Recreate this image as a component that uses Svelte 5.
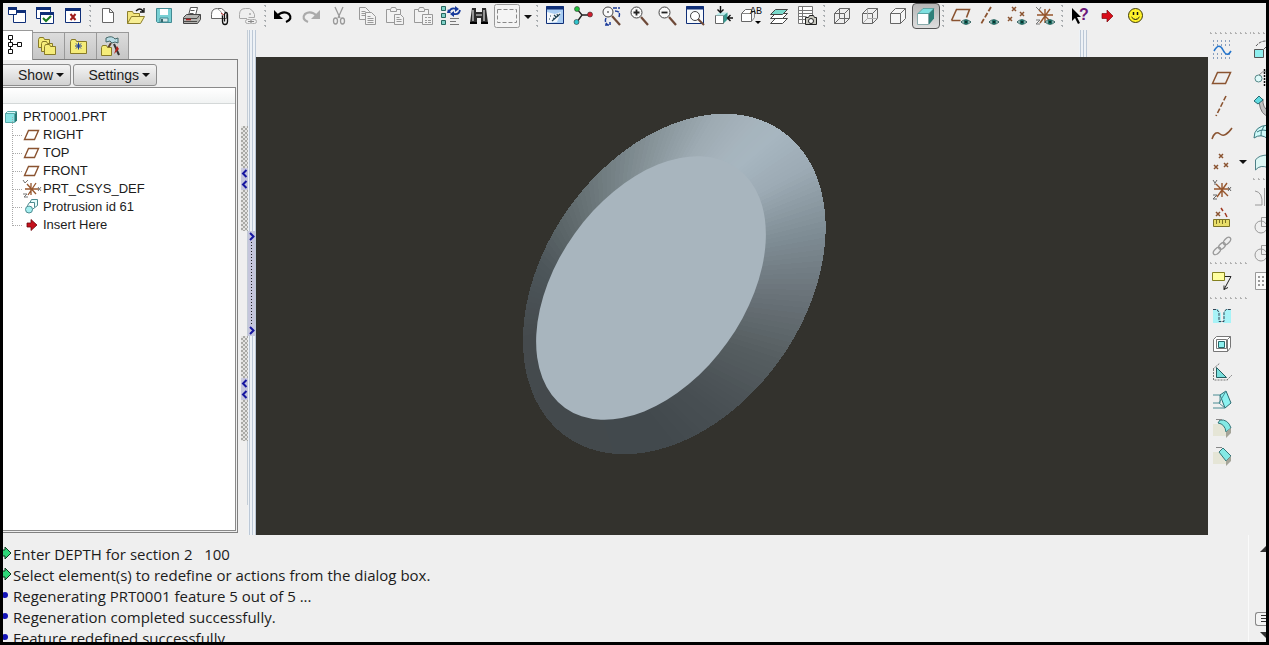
<script>
  const eye = '<path d="M10 16q4.500-4.500 10 0q-5 4.500-10 0z" fill="#cfe3df" stroke="#2b5c5a"/><circle cx="15" cy="16" r="2.500" fill="#1d6b62"/><circle cx="15" cy="16" r="1" fill="#06201e"/>';
  const cross = (x, y, r = 2, c = '#8a5330') => `<path d="M${x - r} ${y - r}l${2 * r} ${2 * r}m0-${2 * r}l-${2 * r} ${2 * r}" fill="none" stroke="${c}" stroke-width="1.500"/>`;
  const disk = (x, y, c) => `<circle cx="${x}" cy="${y}" r="2.500" fill="${c}" stroke="#333" stroke-width=".6"/>`;
  const lens = (x, y, r, sign) => `<path d="M${x + r - 1} ${y + r - 1}L19 19" stroke="#6e4a38" stroke-width="2.200"/><circle cx="${x}" cy="${y}" r="${r}" fill="#fafafa" stroke="#444"/>${sign}`;
  const boxOutline = '<path d="M2.500 7.500h10v10h-10zM2.500 7.500l5-5h10v10l-5 5M12.500 7.500l5-5"/>';
  const csys = '<path d="M10 3v14M2 9h16M4 4l12 12M15 3L5 17" fill="none" stroke="#96552c" stroke-width="1.400"/>';
  const folder = (x, y, w, h) => `<path d="M${x} ${y + 2}l1-2h4l1 2h${w - 6}v${h}h-${w}z" fill="#f5ec79" stroke="#877a28"/>`;

  const icons = {
    windows: '<g fill="#fff" stroke="#0f2f78"><path d="M6.500 4.500h12v12h-12z"/><path d="M6 5.500h13" stroke-width="3"/><path d="M1.500 1.500h8v7h-8z"/><path d="M1 2.500h9" stroke-width="3"/></g>',
    activate: '<g fill="#fff" stroke="#0f2f78"><path d="M1.500 1.500h14v11h-14z"/><path d="M1 2.500h15" stroke-width="3"/><path d="M5.500 6.500h13v11h-13z"/><path d="M5 7.500h14" stroke-width="3"/></g><path d="M8 12l3 3 5-5" fill="none" stroke="#16791f" stroke-width="2"/>',
    close: '<path d="M2.500 2.500h15v14h-15z" fill="#fff" stroke="#0f2f78"/><path d="M2 3.500h16" stroke="#0f2f78" stroke-width="3"/><path d="M7.500 8l5 6m0-6l-5 6" stroke="#a01c1c" stroke-width="2"/>',
    page: '<path d="M4.500 2.500h7l4 4v10h-11zM11.500 2.500v4h4" fill="#fff" stroke="#666"/>',
    open: '<path d="M1.500 17.500v-12h5l1 2h6v3" fill="#f3e67e" stroke="#8d7f2c"/><path d="M1.500 17.500l4-7h13l-4 7z" fill="#f7ee94" stroke="#8d7f2c"/><path d="M10 5q4-4 7 0M18 2v4h-4" fill="none" stroke="#111" stroke-width="1.300"/>',
    save: '<path d="M2.500 2.500h15v14h-14l-1-1z" fill="#79d0d4" stroke="#438a93"/><path d="M6 3h8v6H6z" fill="#fff"/><path d="M6 12h8v4H6z" fill="#d9e9ea" stroke="#438a93"/><path d="M8 13v3" stroke="#36696f" stroke-width="2"/>',
    print: '<path d="M6.500 9.500l2-8h7l-2 8" fill="#fff" stroke="#555"/><path d="M8.500 4.500h4m-5 3h4" stroke="#555"/><path d="M1.500 11.500l3-3h14v5l-3 4h-14z" fill="#b3b3b0" stroke="#444"/><path d="M2 12.500h13l3-4M2 15.500h13" fill="none" stroke="#4a4a48"/><path d="M4 13.500h5" stroke="#b02222" stroke-width="1.500"/>',
    mail: '<path d="M1.500 12.500v-4q0-6 6-6h4q4 2 5 6v4z" fill="#fff" stroke="#666"/><path d="M7.500 3q5 2 5 9" fill="none" stroke="#999"/><path d="M12.500 9.500v6q0 3 2.500 3t2.500-3v-7q0-2-1.500-2t-1.500 2v7" fill="none" stroke="#111" stroke-width="1.300"/><path d="M11 7l3 2" stroke="#b33"/>',
    link: '<g fill="none" stroke="#aaa"><path d="M1.500 12.500v-4q0-6 6-6h4q4 2 5 6v3h-6M2 12.500h7"/><rect x="7.500" y="13.500" width="6" height="4" rx="2"/><rect x="12.500" y="13.500" width="6" height="4" rx="2"/></g><path d="M11 8h2M10 15.500h6" stroke="#888"/>',
    undo: '<path d="M4 10q6-6 12-2q4 5-3 8" fill="none" stroke="#000" stroke-width="2.200"/><path d="M1 4v9h9z"/>',
    redo: '<path d="M16 10q-6-6-12-2q-4 5 3 8" fill="none" stroke="#aaa" stroke-width="2.200"/><path d="M19 4v9h-9z" fill="#aaa"/>',
    cut: '<g fill="none" stroke="#999" stroke-width="1.300"><path d="M6 1l5 11M14 1L9 12"/><ellipse cx="6.500" cy="15" rx="2" ry="3"/><ellipse cx="13.500" cy="15" rx="2" ry="3"/></g>',
    copy: '<g fill="#f2f2f2" stroke="#999"><path d="M2.500 1.500h6l4 4v8h-10z"/><path d="M8.500 6.500h6l4 4v8h-10z"/><path d="M4.500 5.500h4m-4 2h4m-4 2h4m2 1h3m-3 2h6m-6 2h6m-6 2h6"/></g>',
    paste: '<g fill="#f2f2f2" stroke="#999"><path d="M1.500 3.500h14v13h-14z"/><path d="M5.500 3.500l1-2h4l1 2v2h-6z"/><path d="M9.500 8.500h6l3 3v7h-9zM11.500 11.500h3m-3 2h5m-5 2h5"/></g>',
    pasteSpecial: '<g fill="#f2f2f2" stroke="#999"><path d="M1.500 3.500h14v13h-14z"/><path d="M5.500 3.500l1-2h4l1 2v2h-6z"/><path d="M9.500 8.500h10v10h-10zM12 11.500h2m1 0h3m-6 3h2m1 0h3m-6 2h2m1 0h3"/></g>',
    regenerate: '<g fill="#7fd0c7" stroke="#25665f"><path d="M.5.500h4v4h-4zM.5 7.500h4v4h-4zM.5 14.500h4v4h-4z"/></g><path d="M8 6q2-5 7-3M19 4q-1 5-6 4" fill="none" stroke="#173a9c" stroke-width="1.800"/><path d="M14 0l4 3-4 3zM13 5l-4 3 4 3zM7 3l3 4-4 0z" fill="#173a9c"/><path d="M9 12.500h9m-9 3h6m-6 3h9" stroke="#777"/>',
    find: '<path d="M3 2h4v4h6V2h4l2 15h-7v-5H8v5H1z" fill="#2b2b2b"/><path d="M4 4v11m11-11v11" stroke="#bbb" stroke-width="1.500"/><path d="M7 9h6" stroke="#888" stroke-width="2"/><path d="M1 17h7m4 0h7" stroke="#000" stroke-width="2"/>',
    select: '<rect x="-2.500" y="-1.500" width="25" height="23" rx="2" fill="#f4f4f4" stroke="#999"/><path d="M.5 3.500h19v13H.500z" fill="none" stroke="#888" stroke-dasharray="4 2"/>',
    repaint: '<path d="M1.500.500h17v17h-17z" fill="#a9cdf2" stroke="#0f2f78"/><path d="M2 6l8 2 6-2-4 10-10 1z" fill="#f4f8fc"/><path d="M1 2h18" stroke="#0f2f78" stroke-width="3"/><path d="M7 15l8-7M9 9l2 2m1-3l1 3m-5 1l2 1M5 10h1m-2 3h1" stroke="#245" stroke-width="1.200"/>',
    orient: `<path d="M4 3l5 6h8M9 9l-5 7" fill="none" stroke="#222" stroke-width="1.300"/>${disk(4, 3, '#20c43c')}${disk(17, 8.500, '#cf1e2e')}${disk(3.500, 16, '#30c3cc')}`,
    spin: `${lens(7, 6, 5, '<path d="M6 6h2" stroke="#222"/>')}<path d="M12 2h7M14 5q6 0 4 6M5 12q-2 4 2 7M4 19h5v-3" fill="none" stroke="#1d3d9b" stroke-width="1.500" stroke-dasharray="4 1"/>`,
    zoomIn: lens(7.5, 6.5, 5.5, '<path d="M4.500 6.500h6m-3-3v6" stroke="#222" stroke-width="1.800"/>'),
    zoomOut: lens(7.5, 6.5, 5.5, '<path d="M4.500 6.500h6" stroke="#222" stroke-width="1.800"/>'),
    refit: '<path d="M1.500.500h17v17h-17z" fill="#f7fafc" stroke="#0f2f78"/><path d="M1 2h18" stroke="#0f2f78" stroke-width="3"/><path d="M13 13l6 6" stroke="#6e4a38" stroke-width="2"/><circle cx="10" cy="10" r="4.500" fill="#fff" stroke="#444"/>',
    reorient: '<path d="M2.500 9.500h8v8h-8z" fill="#fff" stroke="#666"/><path d="M2.500 9.500l4-3h8l-4 3z" fill="#b7eceb"/><path d="M10.500 9.500l4-3v7l-4 4z" fill="#38988f"/><path d="M7.500 0v6m-3-2.500l3 3 3-3M20 12h-5m2.500-3l-3 3 3 3" fill="none" stroke="#111" stroke-width="1.400"/>',
    views: '<path d="M.5 7.500l4-4h6v12h-10z" fill="#fff" stroke="#666"/><path d="M.5 7.500h10l3-3v7l-3 4" fill="none" stroke="#888"/><text x="9" y="8" font-family="Liberation Mono" font-size="10" fill="#111">AB</text><path d="M14 15h6l-3 3z"/>',
    layers: '<g stroke="#444"><path d="M1.500 17.500l5-5h12l-5 5z" fill="#fff"/><path d="M1.500 12.500l5-5h12l-5 5z" fill="#fff"/><path d="M1.500 8.500l5-5h12l-5 5z" fill="#79d9cb"/></g>',
    viewManager: '<path d="M1.500.500h14v17h-14zM1.500 4.500h14m-14 3h14m-14 3h8m-8 3h7M5.500.500v17" fill="#fff" stroke="#777"/><path d="M8.500 11.500h3l1-2h4l1 2h2v7h-11z" fill="#c8c8bf" stroke="#222"/><circle cx="14" cy="15" r="2.500" fill="#fff" stroke="#222"/>',
    wireframe: `<g fill="none" stroke="#666">${boxOutline}<path d="M7.500 2.500v10h10M7.500 12.500l-5 5"/></g>`,
    hidden: `<g fill="none" stroke="#666">${boxOutline}<path d="M7.500 2.500v10h10M7.500 12.500l-5 5" stroke="#aaa"/></g>`,
    noHidden: `<g fill="#f5f5f5" stroke="#666">${boxOutline}</g>`,
    shaded: '<path d="M1.500 7.500h11v11h-11z" fill="#fff" stroke="#8aa"/><path d="M2 7.500l5-5h11l-5 5z" fill="#7fe0e0" stroke="#3a8b8b" stroke-width=".6"/><path d="M13 7.500l5-5v10l-5 6z" fill="#2f7f79"/>',
    planeEye: `<path d="M.5 14.500l5-11h13l-3 8M.500 14.500h9" fill="none" stroke="#8a5330" stroke-width="1.600"/>${eye}`,
    axisEye: `<path d="M12 1L2 18" stroke="#8a5330" stroke-width="1.800" stroke-dasharray="5 2"/>${eye}`,
    pointEye: cross(7, 3) + cross(3, 13) + cross(15, 8) + eye,
    csysEye: `${csys}<path d="M1 1l3 3 2-3M1 14h4l-4 4h4" fill="none" stroke="#777"/>${eye}`,
    help: '<path d="M2 2v13l3-3 3 6 2-1-3-6h4z" fill="#000"/><text x="9" y="14" font-family="Liberation Sans" font-weight="bold" font-size="16" fill="#6b1679">?</text>',
    go: '<path d="M4 7.500h5V4l6 6-6 6v-3.500H4z" fill="#d80c18" stroke="#7b0a10" stroke-width=".7"/>',
    smile: '<circle cx="9.500" cy="9.500" r="7" fill="#fff22b" stroke="#3f3a08"/><path d="M7.500 6v3m4-3v3" stroke="#111" stroke-width="1.500"/><path d="M5.500 11q4 5 8 0" fill="none" stroke="#111"/>',
    modelTree: '<path d="M4.500 3v13M4.500 9.500h9" stroke="#111" fill="none"/><g fill="#fff" stroke="#111"><path d="M2.500.500h4v4h-4zM2.500 7.500h4v4h-4zM2.500 14.500h4v4h-4zM11.500 7.500h4v4h-4z"/></g>',
    folders: folder(1.5, 1.5, 11, 8) + folder(4.5, 5.5, 11, 8) + folder(7.500, 8.500, 11, 8),
    favorites: folder(1.5, 3.5, 16, 12) + '<path d="M9.500 6.500v7M6 10h7M7 7.500l5 5m0-5l-5 5" stroke="#173a9c"/>',
    connections: '<path d="M5 2q6-3 9 1l3-1v5l-3-1-3 1-2-2-4 1z" fill="#b9dbe4" stroke="#466"/><path d="M10 7L4 17" stroke="#5a4030" stroke-width="2"/><path d="M13 8l5 11" stroke="#333" stroke-width="2"/><path d="M13 18l3-8 2 3z" fill="#b4201b"/>' + folder(.5, 9.5, 10, 8),
    part: '<path d="M2.500 6.500h9v9h-9z" fill="#86e3e4" stroke="#57a9a8"/><path d="M2.500 6.500l2-2h9l-2 2z" fill="#d9f8f8" stroke="#57a9a8"/><path d="M12 6.500l2-2v9l-2 2z" fill="#277773"/>',
    planeSmall: '<path d="M1.500 14.500l4-9h10l-4 9z" fill="#fff" stroke="#8a5330" stroke-width="1.400"/>',
    csysSmall: '<path d="M8 4v12M2 10h14M4 5l9 10M13 4L5 16" stroke="#96552c" stroke-width="1.300"/><path d="M0 1l2 3 3-3M0 15h4l-3 3h4M15 8l3 4m0-4l-3 4" fill="none" stroke="#777"/>',
    protrusion: '<g stroke="#4d8b90"><path d="M6.500 6.500l2-4h6v6l-4 3z" fill="#e4fbfb"/><path d="M4.500 8.500l2-3h5v5l-3 3z" fill="#fff"/><circle cx="6" cy="12.500" r="3.500" fill="#a5eff0"/></g>',
    insert: '<path d="M4 8h4V4.500l6 5.500-6 5.500V12H4z" fill="#c4101c" stroke="#6b080e" stroke-width=".8"/>',
    sketch: '<path d="M1 1h18M1 5h18M1 14h18M1 18h18" stroke="#24508c" stroke-dasharray="1 3"/><path d="M2 11q5-9 9-1t8 1" fill="none" stroke="#2374cc" stroke-width="1.600"/>',
    plane: '<path d="M.5 15.500l5-11h13l-5 11z" fill="none" stroke="#8a5330" stroke-width="1.500"/>',
    axis: '<path d="M14 0L4 20" stroke="#8a5330" stroke-width="1.600" stroke-dasharray="5 2"/>',
    curve: '<path d="M0 15q3-9 8-5t12-6" fill="none" stroke="#8a5330" stroke-width="1.500"/>',
    points: cross(9, 4) + cross(4, 15) + cross(14, 13),
    csys: `${csys}<path d="M1 0l2 3 2-3M3 3v2M1 15h4l-4 4h4M16 7l3 4m0-4l-3 4" fill="none" stroke="#666"/>`,
    measure: `${cross(6, 6)}<path d="M9 0l2 3m2 2l2 4" stroke="#a03920" stroke-width="1.500"/><path d="M1.500 11.500h16v7h-16z" fill="#e8dd68" stroke="#7b7225"/><path d="M4.500 12v4m3-4v3m3-3v4m3-4v3" stroke="#7b7225"/>`,
    chain: '<g fill="none" stroke="#999" stroke-width="1.300"><ellipse cx="5" cy="15" rx="4.500" ry="2.500" transform="rotate(-45 5 15)"/><ellipse cx="10" cy="10" rx="4" ry="2.500" transform="rotate(-45 10 10)"/><ellipse cx="15" cy="5" rx="4.500" ry="2.500" transform="rotate(-45 15 5)"/></g>',
    annotate: '<path d="M.5 1.500h12v8H.500z" fill="#ffffa0" stroke="#83801f"/><path d="M13 5.500h6l-7 13m0-4v4l4-2" fill="none" stroke="#222"/>',
    hole: '<path d="M1 3h5l3 4v10H1zM19 3h-5l-3 4v10h8z" fill="#a8f3f7"/><path d="M1 3.500h4l2 3v9h5v-9l2-3h5" fill="none" stroke="#345" stroke-dasharray="3 1"/>',
    shell: '<path d="M1.500 5.500l3-3h14v11l-3 4h-14z" fill="#fff" stroke="#777"/><path d="M15.500 17.500v-12l3-3M4.500 5.500h10v9h-10z" fill="none" stroke="#777"/><path d="M6.500 7.500h6v6h-6z" fill="#8df0ee" stroke="#27696b"/>',
    rib: '<path d="M4.500 5.500v10h10z" fill="#79dfdd" stroke="#265e60"/><path d="M1.500 7v11h14M1 7l7-6M15 18l5-5" fill="none" stroke="#777" stroke-dasharray="2 1"/>',
    draft: '<path d="M8 5l6-4 5 12-6 5z" fill="#8bf1f0" stroke="#2b6c72"/><path d="M8 5H1m7 0v8H1m12 5H1m13-17l-7 12 6 5" fill="none" stroke="#4a8c93"/>',
    round: '<path d="M1 6h10q4 3 4 12H1z" fill="#e5e5d6"/><path d="M8 2q8-1 11 8l-5 4q-1-8-8-9z" fill="#84e9e5" stroke="#347579"/><path d="M14 14l5-4v5l-5 5z" fill="#a4a498"/><path d="M4 1.500h6" stroke="#888"/>',
    chamfer: '<path d="M1 6h7l7 8v4H1z" fill="#e5e5d6"/><path d="M7 6l4-4 8 8-5 5z" fill="#84e9e5" stroke="#347579"/><path d="M14 15l5-5v5l-5 5z" fill="#a4a498"/><path d="M4 1.500h6" stroke="#888"/>',
    extrude: '<path d="M-.5 9.500h9v8h-9z" fill="#8eeeee" stroke="#555"/><path d="M1 6q4-5 10-5M9 9l5-5" fill="none" stroke="#555" stroke-dasharray="3 1"/>',
    revolve: '<circle cx="3.500" cy="10.500" r="3.500" fill="#dffafa" stroke="#588"/><path d="M9.500 1v18" stroke="#111" stroke-dasharray="2 1" stroke-width="1.500"/><path d="M4 7q3-4 8-4" fill="none" stroke="#888"/>',
    sweep: '<path d="M2 6l6-3q-1 8 6 13v4q-8 0-10-14z" fill="#c1c1c1" stroke="#777"/><path d="M-1 5l5-5 4 4-5 4z" fill="#61dbe0" stroke="#276a73"/>',
    blend: '<path d="M-1 14q0-12 14-13v14q-7-6-14-1z" fill="#cffafa" stroke="#39777d"/><path d="M2 8q6-4 12 0M9 2q-4 6-3 10" fill="none" stroke="#39777d"/>',
    surface: '<path d="M.5 18V8q3-5 13-5v13q-8-4-13 2z" fill="#dcf7f4" stroke="#4d8087"/>',
    mirror: '<path d="M0 4q8 1 7 14H0M9.500 1v18" fill="none" stroke="#999"/>',
    merge: '<circle cx="6" cy="12" r="6" fill="none" stroke="#999"/><path d="M6.500 11.500v-9h8v9z" fill="none" stroke="#999"/>',
    pattern: '<path d="M.5 1.500h18v17H.500z" fill="#fafafa" stroke="#999"/><path d="M3 6h14M3 10h14M3 14h14" stroke="#999" stroke-width="2" stroke-dasharray="2 2"/>'
  };

  const mainTools = [
    'windows', 'activate', 'close', '|',
    'page', 'open', 'save', 'print', 'mail', 'link', '|',
    'undo', 'redo', 'cut', 'copy', 'paste', 'pasteSpecial', 'regenerate', 'find', 'select', 'menu', '|',
    'repaint', 'orient', 'spin', 'zoomIn', 'zoomOut', 'refit', 'reorient', 'views', 'layers', 'viewManager', '|',
    'wireframe', 'hidden', 'noHidden', 'shaded', '|',
    'planeEye', 'axisEye', 'pointEye', 'csysEye', '|',
    'help', 'go', 'smile'
  ];
  const featureTools = [
    ['|', 'sketch', 'plane', 'axis', 'curve', 'points', 'csys', 'measure', 'chain', '|', 'annotate', '|', 'hole', 'shell', 'rib', 'draft', 'round', 'chamfer'],
    ['|', 'extrude', 'revolve', 'sweep', 'blend', 'surface', '|', 'mirror', 'merge', 'merge', 'pattern']
  ];
  const tabs = ['modelTree', 'folders', 'favorites', 'connections'];
  let activeTab = $state('modelTree');
  let display = $state('shaded');
  const displayModes = ['wireframe', 'hidden', 'noHidden', 'shaded'];

  const features = [
    ['planeSmall', 'RIGHT'],
    ['planeSmall', 'TOP'],
    ['planeSmall', 'FRONT'],
    ['csysSmall', 'PRT_CSYS_DEF'],
    ['protrusion', 'Protrusion id 61'],
    ['insert', 'Insert Here']
  ];
  const messages = [
    ['prompt', 'Enter DEPTH for section 2   100'],
    ['prompt', 'Select element(s) to redefine or actions from the dialog box.'],
    ['info', 'Regenerating PRT0001 feature 5 out of 5 ...'],
    ['info', 'Regeneration completed successfully.'],
    ['info', 'Feature redefined successfully.']
  ];

  // Tapered side of the solid: one facet per step, shaded by its direction.
  const outer = { x: 418.3, y: 227, rx: 130, ry: 187, a: 35.2 };
  const inner = { x: 395, y: 231, rx: 93.8, ry: 147.6, a: 35.6 };
  const root = { ...inner, rx: 90, ry: 143 };
  const shades = [
    [0, 167, 182, 192], [20, 156, 170, 180], [45, 127, 141, 149], [68, 106, 115, 121],
    [90, 86, 94, 97], [112, 73, 80, 84], [135, 66, 73, 77], [180, 67, 73, 76],
    [225, 69, 74, 77], [250, 76, 85, 89], [270, 96, 106, 109], [290, 116, 128, 132],
    [312, 139, 152, 158], [330, 157, 170, 178], [348, 166, 180, 189], [360, 167, 182, 192]
  ];
  function rim(e, deg) {
    const t = (deg * Math.PI) / 180;
    const a = (e.a * Math.PI) / 180;
    const u = e.ry * Math.cos(t);
    const v = e.rx * Math.sin(t);
    return [e.x + u * Math.sin(a) + v * Math.cos(a), e.y - u * Math.cos(a) + v * Math.sin(a)].map((n) => n.toFixed(2)).join(',');
  }
  function shade(deg) {
    const i = Math.max(1, shades.findIndex((s) => s[0] >= deg));
    const p = shades[i - 1];
    const q = shades[i];
    const k = (deg - p[0]) / (q[0] - p[0]);
    return `rgb(${[1, 2, 3].map((c) => Math.round(p[c] + (q[c] - p[c]) * k)).join(',')})`;
  }
  const facets = Array.from({ length: 180 }, (_, i) => ({
    points: [rim(root, i * 2), rim(outer, i * 2), rim(outer, i * 2 + 2.4), rim(root, i * 2 + 2.4)].join(' '),
    fill: shade(i * 2 + 1)
  }));
</script>

{#snippet icon(name)}
  <svg class="icon" viewBox="0 0 20 20" aria-hidden="true">{@html icons[name]}</svg>
{/snippet}

{#snippet chevron(d)}
  <svg class="chevron" viewBox="0 0 7 11" aria-hidden="true"><path {d} /></svg>
{/snippet}

<div class="app">
  <div class="toolbar" role="toolbar">
    {#each mainTools as tool}
      {#if tool === '|'}
        <span class="sep"></span>
      {:else if tool === 'menu'}
        <button class="caret" aria-label="Selection options"><i class="down"></i></button>
      {:else}
        <button class="tool" class:pressed={display === tool} aria-label={tool} onclick={() => displayModes.includes(tool) && (display = tool)}>{@render icon(tool)}</button>
      {/if}
    {/each}
  </div>

  <div class="work">
    <aside>
      <div class="tabs">
        {#each tabs as tab}
          <button class="tab" class:active={activeTab === tab} aria-label={tab} onclick={() => (activeTab = tab)}>{@render icon(tab)}</button>
        {/each}
      </div>
      <div class="panel">
        <div class="menus">
          <button class="menu show">Show <i class="down"></i></button>
          <button class="menu settings">Settings <i class="down"></i></button>
        </div>
        <div class="tree">
          <div class="head"></div>
          <div class="node">{@render icon('part')}PRT0001.PRT</div>
          <ul>
            {#each features as [glyph, label]}
              <li class="node">{@render icon(glyph)}{label}</li>
            {/each}
          </ul>
        </div>
      </div>
    </aside>

    <div class="gutter">
      {#each ['Collapse tree', 'Collapse panel'] as label}
        <button class="grip" aria-label={label}>
          {@render chevron('M5.500 2L2 5.500 5.500 9')}
          {@render chevron('M5.500 2L2 5.500 5.500 9')}
        </button>
      {/each}
    </div>
    <div class="splitter">
      <button class="expand" aria-label="Expand">
        {@render chevron('M2 2l3.500 3.500L2 9')}
        <span class="dots"></span>
        {@render chevron('M2 2l3.500 3.500L2 9')}
      </button>
    </div>

    <main>
      <div class="strip"><span class="rails"></span></div>
      <svg class="scene" viewBox="0 0 952 478" role="img" aria-label="Part">
        <g shape-rendering="crispEdges">
          {#each facets as f}
            <polygon points={f.points} fill={f.fill} />
          {/each}
        </g>
        <ellipse rx={inner.rx} ry={inner.ry} transform="translate({inner.x} {inner.y}) rotate({inner.a})" fill="#a8b5be" />
      </svg>
    </main>

    <div class="features">
      {#each featureTools as column}
        <div class="column">
          {#each column as tool}
            {#if tool === '|'}
              <span class="rule"></span>
            {:else}
              <div class="slot">
                <button class="tool" aria-label={tool}>{@render icon(tool)}</button>
                {#if tool === 'points'}
                  <button class="caret" aria-label="Point types"><i class="down"></i></button>
                {/if}
              </div>
            {/if}
          {/each}
        </div>
      {/each}
    </div>
  </div>

  <footer>
    <ul class="log">
      {#each messages as [kind, text]}
        <li>
          <svg class="mark" viewBox="0 0 10 14" aria-hidden="true">
            {#if kind === 'prompt'}
              <path d="M-2 4h4V1l6 6-6 6v-3h-4z" fill="#2fd878" stroke="#0b3a1c" />
            {:else}
              <circle cx="2" cy="7" r="3" fill="#1414b8" />
            {/if}
          </svg>{text}
        </li>
      {/each}
    </ul>
    <div class="scroll">
      <button aria-label="Scroll up"><i class="up"></i></button>
      <span class="thumb"></span>
      <button class="end" aria-label="Scroll down"><i class="down big"></i></button>
    </div>
  </footer>
</div>

<style>
  :global(body) { margin: 0; }
  .app {
    box-sizing: border-box;
    height: 100vh;
    display: flex;
    flex-direction: column;
    border: 3px solid #000;
    background: #efefef;
    color: #1c1c1c;
    font: 13px/18px "Liberation Sans", Arial, sans-serif;
    overflow: hidden;
  }
  button { padding: 0; border: 0; background: none; color: inherit; font: inherit; }
  ul { margin: 0; padding: 0; list-style: none; }
  .icon { width: 20px; height: 20px; flex: none; display: block; overflow: visible; }
  .toolbar { display: flex; height: 27px; flex: none; overflow: hidden; }
  .tool { box-sizing: border-box; width: 28px; height: 26px; flex: none; display: grid; place-items: center; }
  .pressed { border: 1px solid #555; border-radius: 4px; background: linear-gradient(#b5b5b5, #dedede); }
  .sep { width: 7px; flex: none; background: radial-gradient(circle, #a9adb0 1px, transparent 1px) 0 0 / 7px 5px; }
  .caret { width: 13px; flex: none; display: grid; place-items: center; }
  .down { width: 0; height: 0; border: 4px solid transparent; border-top-color: #111; border-bottom: 0; }
  .up { width: 0; height: 0; border: 6px solid transparent; border-bottom-color: #333; border-top: 0; }
  .big { border-width: 6px; border-bottom: 0; border-top-color: #333; }

  .work { flex: 1; min-height: 0; display: flex; }
  aside { width: 235px; flex: none; display: flex; flex-direction: column; padding-bottom: 2px; }
  .tabs { display: flex; height: 29px; flex: none; }
  .tab { box-sizing: border-box; width: 32px; margin-top: 2px; border: 1px solid #999; border-left: 0; border-bottom: 0; background: linear-gradient(#dcdcdc, #c6c6c6); display: flex; align-items: center; padding-left: 4px; }
  .tab.active { width: 30px; margin: 0 0 -1px; padding: 0 0 1px 3px; background: #fff; position: relative; }
  .panel { box-sizing: border-box; flex: 1; min-height: 0; display: flex; flex-direction: column; border: 1px solid #808080; border-left: 0; padding: 4px 1px 1px 0; }
  .menus { display: flex; gap: 2px; height: 23px; flex: none; font-size: 14px; }
  .menu { box-sizing: border-box; height: 22px; display: flex; align-items: center; justify-content: flex-end; gap: 3px; padding-right: 6px; border: 1px solid #8d8d8d; border-radius: 3px; background: linear-gradient(#f4f4f4, #d2d2d2); }
  .show { width: 68px; border-left: 0; border-radius: 0 3px 3px 0; }
  .settings { width: 84px; }
  .tree { flex: 1; border: 1px solid #8a8a8a; border-left: 0; background: #fff; }
  .head { height: 15px; margin-bottom: 4px; border-bottom: 1px solid #d4d8d8; background: linear-gradient(#fff, #f1f3f3); }
  .node { display: flex; align-items: center; height: 18px; white-space: nowrap; }
  .tree ul { margin-left: 9px; }
  .tree li { position: relative; padding-left: 11px; }
  .tree li::before { content: ""; position: absolute; left: 0; top: -9px; width: 9px; height: 18px; border: 1px dotted #aaa; border-width: 0 0 1px 1px; }

  .gutter { box-sizing: border-box; width: 10px; flex: none; display: flex; flex-direction: column; gap: 105px; padding: 96px 0 0 3px; background: linear-gradient(#c4cdd6, #c4cdd6) right top / 1px 475px no-repeat; }
  .grip { width: 7px; height: 105px; display: flex; flex-direction: column; align-items: center; justify-content: center; background: repeating-conic-gradient(#a9a9a5 0 25%, #e4e4e2 0 50%) 0 0 / 4px 4px; }
  .chevron { display: block; width: 7px; height: 11px; flex: none; background: #c5c6dc; }
  .chevron path { fill: none; stroke: #1616a0; stroke-width: 2px; }
  .splitter, .rails { background: repeating-linear-gradient(90deg, #eef2f6 0 1px, #bcc8d6 1px 2px, #eef2f6 2px 3px); }
  .splitter { width: 8px; flex: none; box-sizing: border-box; padding-top: 201px; }
  .expand { width: 7px; height: 105px; display: flex; flex-direction: column; align-items: center; background: #c5c6dc; }
  .dots { flex: 1; width: 1px; background: repeating-linear-gradient(#222 0 1px, transparent 1px 3px); }

  main { flex: 1; min-width: 0; display: flex; flex-direction: column; }
  .strip { height: 27px; flex: none; display: flex; justify-content: flex-end; }
  .rails { width: 8px; margin-right: 121px; }
  .scene { flex: 1; min-height: 0; width: 100%; background: #33322d; }

  .features { width: 58px; flex: none; display: flex; overflow: hidden; }
  .column { width: 43px; flex: none; display: flex; flex-direction: column; }
  .slot { display: flex; height: 28px; flex: none; align-items: center; }
  .rule { width: 40px; height: 7px; flex: none; background: radial-gradient(circle, #b2b2b2 1px, transparent 1px) 0 0 / 5px 7px; }
  .rule:first-child { height: 6px; width: 43px; }

  footer { height: 107px; flex: none; display: flex; overflow: hidden; }
  .log { flex: 1; padding-top: 9px; font: 15px/21px "Open Sans", "Noto Sans", sans-serif; white-space: pre; }
  .log li { display: flex; height: 21px; }
  .mark { width: 10px; height: 14px; flex: none; margin-top: 2px; }
  .scroll { width: 17px; flex: none; display: flex; flex-direction: column; border-left: 1px solid #fafafa; }
  .scroll button { margin-left: 11px; height: 28px; flex: none; display: flex; align-items: center; }
  .scroll .end { height: 14px; }
  .thumb { box-sizing: border-box; height: 14px; margin: auto 0 2px 6px; border: 1px solid #888; border-right: 0; border-radius: 3px 0 0 3px; background: linear-gradient(#333, #333) 5px 2px / 8px 1px no-repeat, linear-gradient(#333, #333) 5px 5px / 8px 1px no-repeat, linear-gradient(#333, #333) 5px 8px / 8px 1px no-repeat, #f4f4f4; }
</style>
